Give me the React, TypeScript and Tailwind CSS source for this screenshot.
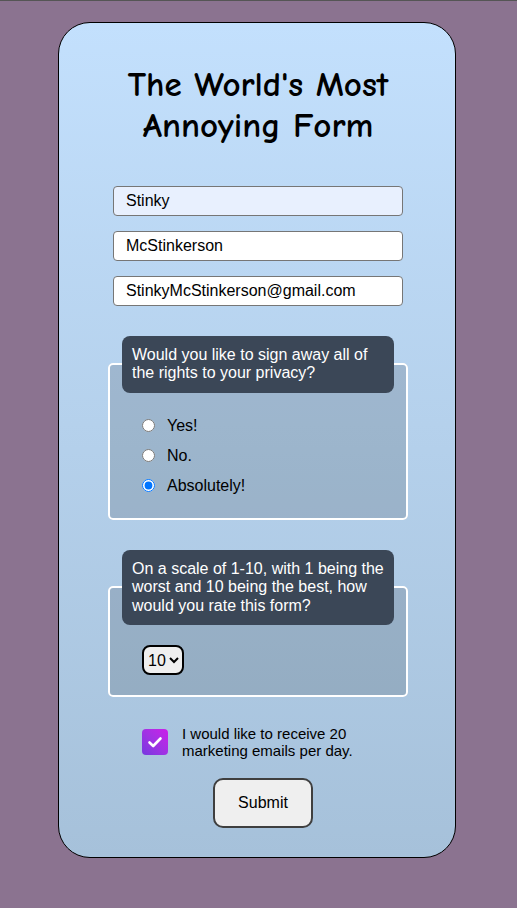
import { useState } from "react";

const sans = { fontFamily: '"Liberation Sans", Arial, sans-serif' };

export default function App() {
  const [privacy, setPrivacy] = useState("absolutely");
  const [rating, setRating] = useState("10");
  const [emails, setEmails] = useState(true);

  return (
    <div
      className="min-h-[908px] border-t border-[#555555] bg-[#8b7390] pt-[21px]"
      style={sans}
    >
      <form
        className="ml-[58px] flex h-[836px] w-[398px] flex-col items-center rounded-[32px] border border-black bg-gradient-to-b from-[#c3e0fd] to-[#a6c1da] pt-[41px] pb-[30px] pl-[2px] *:shrink-0"
        onSubmit={(e) => e.preventDefault()}
      >
        <h1
          className="text-center text-[35px] font-bold leading-[41px] text-black"
          style={{ fontFamily: '"Comic Sans MS", "Comic Neue", cursive' }}
        >
          The World's Most
          <br />
          Annoying Form
        </h1>

        <div className="mt-[40px] flex flex-col gap-[15px]">
          <input
            defaultValue="Stinky"
            className="h-[30px] w-[290px] rounded-[4px] border border-[#767676] bg-[#e8f0fe] px-3 text-base text-black outline-none"
          />
          <input
            defaultValue="McStinkerson"
            className="h-[30px] w-[290px] rounded-[4px] border border-[#767676] bg-white px-3 text-base text-black outline-none"
          />
          <input
            defaultValue="StinkyMcStinkerson@gmail.com"
            className="h-[30px] w-[290px] rounded-[4px] border border-[#767676] bg-white px-3 text-base text-black outline-none"
          />
        </div>

        <fieldset className="mt-[30px] w-[300px] rounded-[5px] border-2 border-white bg-[rgba(0,0,0,0.13)] px-3 pb-[17px]">
          <legend className="w-[272px] rounded-[8px] bg-[#3b4757] p-[10px] text-base leading-[18.4px] text-white">
            Would you like to sign away all of the rights to your privacy?
          </legend>
          <div className="mt-[18px] flex flex-col pl-5">
            {[
              ["yes", "Yes!"],
              ["no", "No."],
              ["absolutely", "Absolutely!"],
            ].map(([value, label]) => (
              <label key={value} className="flex h-[30px] items-center gap-3 text-base text-black">
                <input
                  type="radio"
                  name="privacy"
                  value={value}
                  checked={privacy === value}
                  onChange={() => setPrivacy(value)}
                  className="m-0 h-[13px] w-[13px]"
                />
                {label}
              </label>
            ))}
          </div>
        </fieldset>

        <fieldset className="mt-[30px] w-[300px] rounded-[5px] border-2 border-white bg-[rgba(0,0,0,0.13)] px-3 pb-[20px]">
          <legend className="w-[272px] rounded-[8px] bg-[#3b4757] p-[10px] text-base leading-[18.4px] text-white">
            On a scale of 1-10, with 1 being the worst and 10 being the best, how would you rate this form?
          </legend>
          <div className="mt-[20px] pl-5">
            <select
              value={rating}
              onChange={(e) => setRating(e.target.value)}
              className="h-[30px] rounded-[8px] border-2 border-black bg-[#efefef] p-0 text-base text-black"
            >
              {Array.from({ length: 10 }, (_, i) => (
                <option key={i + 1} value={String(i + 1)}>
                  {i + 1}
                </option>
              ))}
            </select>
          </div>
        </fieldset>

        <label className="mt-[28px] flex w-[300px] items-center gap-[14px] pl-[34px]">
          <input
            type="checkbox"
            checked={emails}
            onChange={() => setEmails(!emails)}
            className="sr-only"
          />
          <span className="flex h-[26px] w-[26px] shrink-0 items-center justify-center rounded-[4px] bg-gradient-to-tr from-[#7638df] to-[#cc1ae9]">
            {emails && (
              <svg width="16" height="16" viewBox="0 0 16 16" fill="none">
                <path
                  d="M2.5 8.5 L6.2 12 L13.5 4.5"
                  stroke="white"
                  strokeWidth="2.6"
                  strokeLinecap="round"
                  strokeLinejoin="round"
                />
              </svg>
            )}
          </span>
          <span className="w-[190px] text-[15px] leading-[17px] text-black">
            I would like to receive 20 marketing emails per day.
          </span>
        </label>

        <button
          type="submit"
          className="mt-[19px] ml-[10px] h-[50px] w-[100px] rounded-[10px] border-2 border-[#3f3f3f] bg-[#efefef] text-base text-black"
        >
          Submit
        </button>
      </form>
    </div>
  );
}
